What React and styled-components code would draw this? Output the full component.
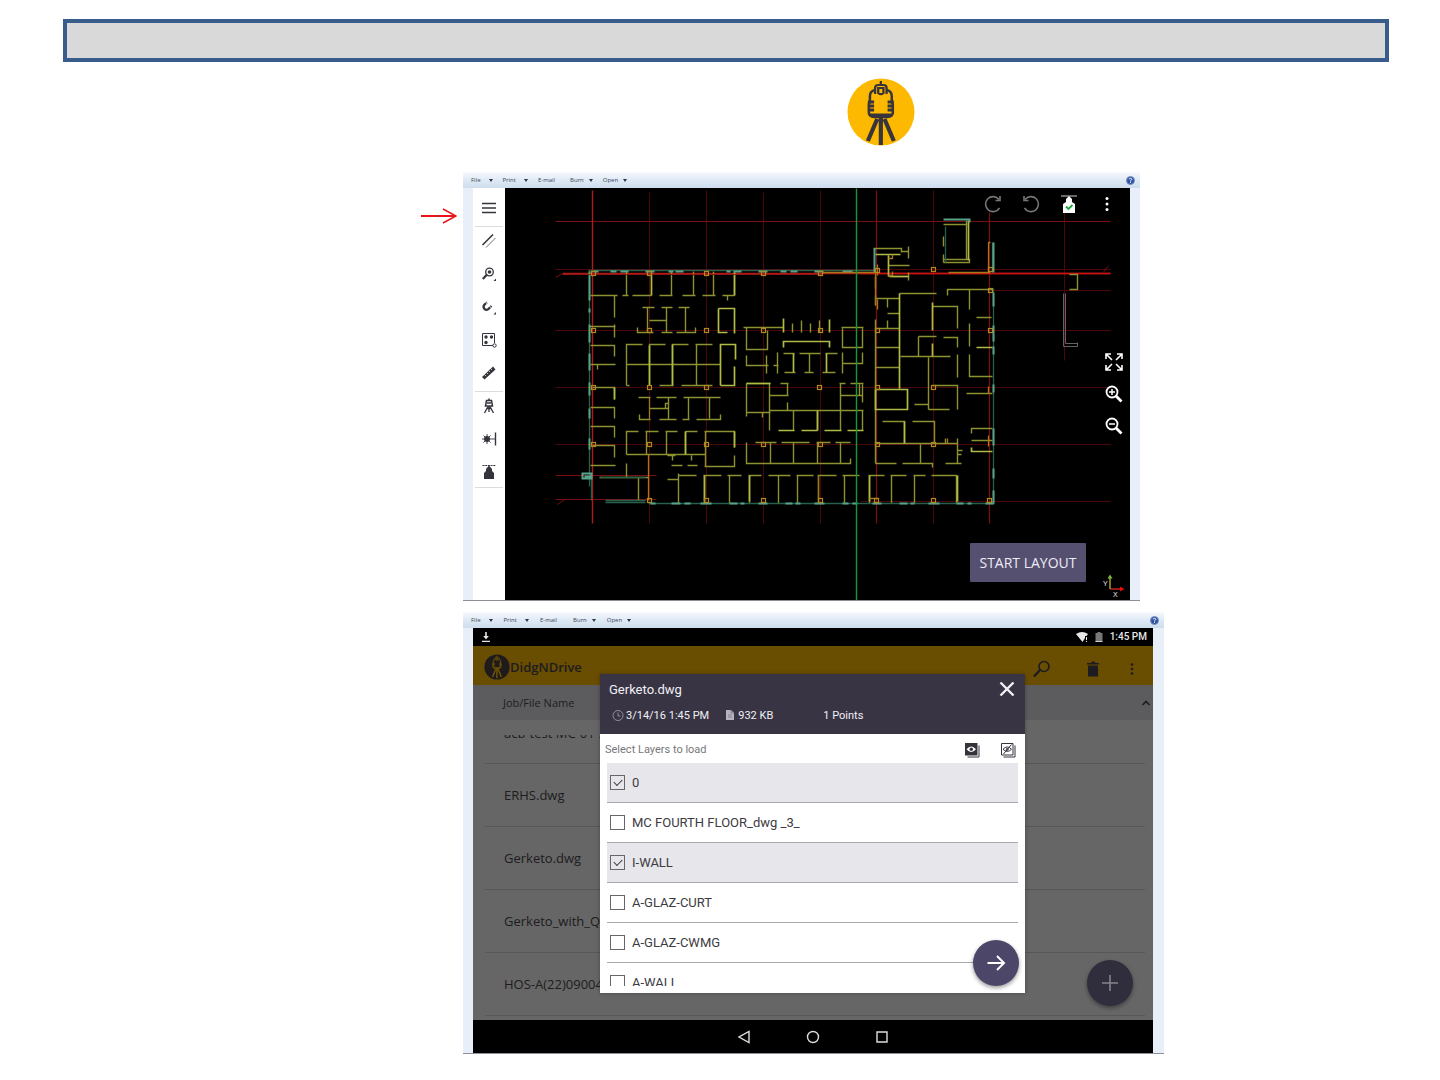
import styled, { createGlobalStyle } from 'styled-components'

const GlobalStyle = createGlobalStyle`
    * {
        box-sizing: border-box;
    }
    body {
        margin: 0;
        background: #fff;
        font-family: Roboto, sans-serif;
    }
    button {
        border: 0;
        padding: 0;
        background: none;
        color: inherit;
        font: inherit;
    }
    svg {
        display: block;
    }
`

// page
const Banner = styled.header`
    height: 43px;
    margin: 19px 51px 0 63px;
    border: 4px solid #385d8a;
    background: #d9d9d9;
`
const Sheet = styled.main`
    display: grid;
    grid-template-columns: 463fr 701fr 276fr;
    padding-top: 15px;
`
const LogoRow = styled.div`
    grid-column: 2;
    padding-left: 54.8%;
    padding-bottom: 26px;
`
const Pointer = styled.div`
    grid-column: 1;
    display: flex;
    justify-content: flex-end;
    padding: 35px 6px 0 0;
`
const Viewer = styled.section`
    grid-column: 2;
    min-width: 0;
    margin-right: ${props => props.$inset || '0'};
    margin-bottom: 11px;
    background: #e9eff9;
    border-bottom: 1px solid #8d9096;
`

// photo viewer menu
const MenuBar = styled.nav`
    display: flex;
    align-items: center;
    gap: ${props => props.$gap || '10px'};
    height: 16px;
    padding: 0 5px 0 8px;
    background: linear-gradient(#f7fafe, #dfe9f6 50%, #cddded);
`
const MenuItem = styled.button`
    display: flex;
    align-items: center;
    gap: ${props => (props.$wide ? '8px' : '5px')};
    margin-right: ${props => (props.$plain ? '5px' : '0')};
    font: 6px/12px 'Open Sans', sans-serif;
    color: #3c4656;
`
const Caret = styled.span`
    border: 2px solid transparent;
    border-top: 3px solid #2c3442;
    border-bottom: 0;
`
const Help = styled.button`
    margin-left: auto;
`

// cad app
const CadApp = styled.div`
    display: flex;
    margin: 0 10px;
    background: #000;
`
const ToolBar = styled.div`
    flex: 0 0 32px;
    background: #fff;
    color: #35343c;
`
const ToolGroup = styled.div`
    display: flex;
    flex-direction: column;
    height: ${props => props.$height};
    margin: 0 2px;
    border-bottom: 1px solid #dcdce0;
`
const Tool = styled.button`
    display: flex;
    justify-content: center;
    flex: 0 0 33px;
    padding-top: 6px;
`
const MenuTool = styled(Tool)`
    padding-top: 12px;
`
const Canvas = styled.div`
    position: relative;
    flex: 1;
    min-width: 0;
`
const Actions = styled.div`
    position: absolute;
    top: 4px;
    right: 11px;
    display: flex;
    gap: 14px;
`
const ZoomTools = styled.div`
    position: absolute;
    top: 163px;
    right: 5px;
    display: flex;
    flex-direction: column;
    gap: 10px;
    color: #fff;
`
const IconButton = styled.button`
    display: flex;
    align-items: center;
    justify-content: center;
    width: ${props => props.$size || '24px'};
    height: ${props => props.$size || '24px'};
    margin-right: ${props => props.$after || '0'};
`
const StartButton = styled.button`
    position: absolute;
    right: 44px;
    bottom: 18px;
    width: 116px;
    height: 39px;
    border-radius: 1px;
    background: #554f70;
    color: #eeedf5;
    font: 14px/20px 'Open Sans', sans-serif;
`

// tablet
const Tablet = styled.div`
    position: relative;
    margin: 0 11px 0 10px;
    background: #666;
    color: #1d1c20;
    font-family: 'Open Sans', sans-serif;
`
const StatusBar = styled.div`
    display: flex;
    align-items: center;
    gap: 6px;
    height: 18px;
    padding: 0 6px 0 8px;
    background: #000;
    color: #e6e6e6;
    font: 500 10px/18px Roboto, sans-serif;
`
const Spacer = styled.span`
    flex: 1;
`
const AppBar = styled.div`
    display: flex;
    align-items: center;
    height: 39px;
    padding: 2px 9px 0 11px;
    background: #694d00;
`
const AppName = styled.h1`
    flex: 1;
    margin: 0;
    font: 600 13px/16px 'Open Sans', sans-serif;
`
const AppActions = styled.div`
    display: flex;
    gap: 15px;
    padding-top: 4px;
`
const ColumnHead = styled.div`
    display: flex;
    align-items: center;
    justify-content: space-between;
    height: 35px;
    padding: 0 2px 0 30px;
    background: #5c5c5f;
    font-size: 11px;
`
const Files = styled.ul`
    height: 285px;
    margin: 15px 8px 0 12px;
    padding: 0;
    overflow: hidden;
    list-style: none;
    font-size: 13px;
    line-height: 18px;
`
const File = styled.li`
    display: flex;
    align-items: center;
    height: 63px;
    padding-left: 19px;
    border-bottom: 1px solid #575757;
    white-space: nowrap;
`
const CutFile = styled(File)`
    align-items: flex-start;
    height: 29px;
    overflow: hidden;

    span {
        margin-top: -11px;
    }
`
const NavBar = styled.div`
    display: flex;
    align-items: center;
    justify-content: center;
    gap: 45px;
    height: 33px;
    background: #000;
`
const Fab = styled.button`
    position: absolute;
    right: ${props => props.$right};
    bottom: ${props => props.$bottom};
    display: flex;
    align-items: center;
    justify-content: center;
    width: 46px;
    height: 46px;
    border-radius: 50%;
    background: ${props => props.color};
    box-shadow: 0 2px 4px rgba(0, 0, 0, 0.4);
`

// dialog
const Dialog = styled.div`
    position: absolute;
    top: 46px;
    left: 127px;
    right: 128px;
    background: #fff;
    font-family: Roboto, sans-serif;
    box-shadow: 0 0 4px rgba(0, 0, 0, 0.3);
`
const DialogHead = styled.div`
    height: 60px;
    padding: 6px 9px 0;
    background: #383444;
    color: #f1f0f5;
`
const TitleRow = styled.div`
    display: flex;
    align-items: flex-start;
    justify-content: space-between;
`
const Title = styled.h2`
    margin: 0;
    font: 13px/20px Roboto, sans-serif;
`
const Meta = styled.div`
    display: flex;
    align-items: center;
    gap: 2px;
    padding: 8px 3px 0;
    font-size: 11px;
    line-height: 16px;
`
const MetaText = styled.span`
    margin-right: ${props => props.$after || '0'};
`
const Hint = styled.div`
    display: flex;
    align-items: center;
    height: 29px;
    padding: 2px 9px 0 5px;
    color: #77777b;
    font-size: 11px;
`
const HintActions = styled.div`
    display: flex;
    gap: 20px;
    margin-left: auto;
`
const Layers = styled.div`
    height: 223px;
    margin: 0 7px 7px;
    overflow: hidden;
`
const Layer = styled.label`
    display: flex;
    align-items: center;
    gap: 7px;
    height: 40px;
    padding-left: 3px;
    border-bottom: 1px solid #a9a8ae;
    background: ${props => (props.$on ? '#e7e6eb' : '#fff')};
    color: #3c3b42;
    font-size: 13px;
`
const Check = styled.input`
    appearance: none;
    display: flex;
    align-items: center;
    justify-content: center;
    width: 15px;
    height: 15px;
    margin: 0;
    border: 1px solid #67666d;

    &:checked::after {
        content: '';
        width: 7px;
        height: 4px;
        margin-bottom: 2px;
        border: solid #3c3b42;
        border-width: 0 0 1px 1px;
        transform: rotate(-45deg);
    }
`

const menu = [
    { name: 'File', wide: true },
    { name: 'Print', wide: true },
    { name: 'E-mail', plain: true },
    { name: 'Burn' },
    { name: 'Open' },
]

const layers = [
    { name: '0', on: true },
    { name: 'MC FOURTH FLOOR_dwg _3_' },
    { name: 'I-WALL', on: true },
    { name: 'A-GLAZ-CURT' },
    { name: 'A-GLAZ-CWMG' },
    { name: 'A-WALL' },
]

const files = ['ERHS.dwg', 'Gerketo.dwg', 'Gerketo_with_Q', 'HOS-A(22)09004']

// floor plan, one path per pen
const plan = {
    grid: 'M649 192V523M706 190V523M763 192V523M820 190V523M933 190V523M1064 212V360M555 269H1110M555 330H1110M555 387H1110M555 444H1110M860 501H1110M990 290H1110',
    gridLight: 'M555 221H1110M876 190V523M989 212V523M555 475H656M555 499H656',
    gridBright: 'M592 190V523M562 273H1110',
    walls: `M590 295H617M614 295V317M626 271V295M622 295H628M632 295H651M659 295H672M671 271V295M682 295H695M693 271V295M702 295H715M713 271V295M722 295H734M734 272V295M727 295V300
        M642 307H654M647 307V332M661 307H672M666 307V332M678 307H689M685 307V332M649 320H666M637 327V332H653M661 332H672M676 332H695V327
        M589 326H615M614 324V337M590 345H614V356M590 364H615M597 364V369M592 387H614V399M590 407H614V418M590 426H614V437M592 445H614V457M590 465H615
        M626 385V344H642M649 385V344H665M672 385V344H688M696 385V344M695 344H712M626 364H720M626 385H629M659 385H673M681 385H712
        M638 397H650M656 397H676M683 397H720M668 397V419M688 397V419M709 397V418M649 408H668M639 414V419H650M659 419H676M682 419H689M696 419H720V414M665 408V403H668
        M626 454V431H638M645 431H658M665 431H677M685 431H697M646 431V454M666 431V454M685 431V454M704 431H734V447M705 431V466M734 455V466H704M626 454H705M626 463V477M667 455H675M672 455V460M671 465H682M691 455V460M687 465H697M667 479H678M599 477H648M638 477V500
        M678 503V473M678 475H696M703 475H721M704 475V503M727 475H741M729 475V503M748 475H761M749 475V503M768 475H790M778 475V503M796 475H813M797 475V503M817 475H836M818 475V503M842 475H859M844 475V503M868 475H884M869 475V503M890 475H906M891 475V503M913 475H925M914 475V503M931 475H956V503
        M743 327H783M746 327V349H767V330M746 355V365H768M766 355V373M773 365H778M777 352V373M792 323V332M801 320V332M810 323V332M819 320V332M783 353H794M799 353H820M825 353H837M809 353V372M784 372H795M804 372H813M822 372H835M841 327H863M842 328V347H862V328M862 352V363H842M842 352V373
        M746 383H770M780 383H788M746 383V416M769 383V430M746 412H770M762 412V417M769 395H788M787 383V395M787 402V410M769 410H863M839 383H845M850 383H863M840 395H862M840 383V430M862 384V402M859 384V395M862 410V430M793 410V430M817 410V430
        M746 442V463H850V458M755 442H776M781 442H809M816 442H830M835 442H850M770 442V463M793 442V463M817 442V463M840 442V463
        M875 276V288M875 295V305M875 319V463M875 298H899M887 298V307M887 320V328M887 313H899M875 328H899M875 347H899M875 367H899M899 293H936M900 356H950M918 336V356M918 336H936M932 306H957V328M943 337H957V347M957 354V377M932 385H957V409M914 404H928M928 409H949M928 357V409
        M947 295V289H993M969 289V309M969 323V346M969 354V376H992M976 317H991M966 393H992M971 433V428H992M971 440H992M882 421H904V443M912 421H934V443M875 443H957M875 463H896M920 444V463M902 463H932V467M945 463H961M957 438V463M945 438V443M957 450H962M957 454H961
        M873 248H901V252M901 251H908M908 246V258M888 265H909M888 276H909M908 272V280M943 224H967M943 262H969V259H943M943 236V246M943 254V262M966 220V259M1069 274H1077V289H1069`,
    wallsBright: `M651 273V295M734 272V295M718 308H734V333M718 308V332H727M649 345V385M672 344V385M720 385V344H735V359M734 366V385H720M614 387V399M685 431V454M734 431V447M704 475V501M749 475V501M869 475V501
        M783 318V332M829 319V332M783 347V341H829V347M793 353V372M826 353V372M778 430H794M801 430H817M824 430H841M847 430H863M817 410V430M875 254H900M888 255V276M890 276H908
        M899 293V388M875 389H907V409H875V389M932 302V330M932 343V356M976 347H992M971 447V451H992M904 421V443M957 475V501M968 220V260M746 383H770`,
    orange: `M648 454V500M649 397V419M822 272H875M877 299V309M877 264V275M948 272H990M988 272V242H990M988 386V393M988 435V446M875 273V305M888 258H892V254M888 275H892V271M818 476V500M878 498H869M947 438V443`,
    teal: 'M588 270H875M589 270V486M993 288V504M648 503H994M591 475V500M605 502H645M600 477H645M605 500H645M992 242V272M945 226V262',
    tealBright: `M589 271V300M589 308V312M589 324V342M589 353V370M589 382V395M589 408V418M589 438V449M593 271H598M610 271H616M620 271H628M645 271H654M668 271H673M675 271H683M726 271H730M733 271H741M758 271H767M780 271H786M790 271H797M814 271H823M842 271H852M874 248V272M943 219H969V222M993 242V272M993 292V306M993 325V341M993 346V354M993 384V392M993 428V445M993 468V478
        M582 473H591V478H582ZM584 476H590M650 503H655M671 503H680M684 503H690M700 503H711M729 503H737M740 503H744M758 503H767M785 503H792M795 503H800M814 503H824M842 503H848M852 503H857M872 503H881M899 503H907M910 503H914M928 503H939M956 503H963M967 503H971M985 503H993M993 490V503`,
}

// structural columns
const columns = [
    [593, 273], [649, 273], [706, 273], [763, 273], [820, 273], [877, 270], [933, 269], [990, 269], [990, 290],
    [593, 330], [649, 330], [706, 330], [763, 330], [820, 330], [877, 330], [990, 330],
    [593, 387], [649, 387], [706, 387], [819, 387], [877, 387], [933, 387],
    [593, 444], [649, 444], [706, 444], [763, 444], [820, 444], [877, 444], [933, 444],
    [649, 500], [706, 500], [763, 500], [820, 500], [876, 500], [933, 500], [989, 500],
]

function FloorPlan() {
    return (
        <svg width='100%' viewBox='505 188 625 412' fill='none'>
            <g transform='translate(0.5 0.5)'>
                <path d={plan.grid} stroke='#4c060a' />
                <path d={plan.gridLight} stroke='#7c0d10' strokeWidth='1.200' />
                <path d={plan.gridBright} stroke='#b01a18' strokeWidth='1.400' />
                <path d='M860 273H1110' stroke='#d01010' strokeWidth='1.600' />
                <path d='M555 277L562 273M557 504L564 499M1102 273L1108 265' stroke='#7c0d10' />
                <path d={plan.walls} stroke='#8d9130' strokeWidth='1.400' />
                <path d={plan.wallsBright} stroke='#b0bb45' strokeWidth='1.700' />
                <path d='M1063 293V346H1077V342M1065 293V343H1077' stroke='#606468' />
                <path d={plan.teal} stroke='#28604c' strokeWidth='1.300' />
                <path d={plan.tealBright} stroke='#58a48b' strokeWidth='2' />
                <path d='M562 274H822' stroke='#8e1514' />
                <path d={plan.orange} stroke='#a8761a' strokeWidth='1.300' />
                {columns.map(([x, y]) => (
                    <rect key={`${x}-${y}`} x={x - 2} y={y - 2} width='4' height='4' stroke='#b08a1e' strokeWidth='1.200' />
                ))}
                <path d='M856 188V600' stroke='#17973a' strokeWidth='1.400' />
            </g>
            <path d='M1110 589V577M1110 589H1121' stroke='#c8201a' strokeWidth='1.400' />
            <path d='M1110 589V578' stroke='#6da32d' strokeWidth='1.400' />
            <path d='M1107.500 578.500L1110 574.500L1112.500 578.500Z' fill='#7fb83a' />
            <path d='M1120 586.500L1124.500 589L1120 591.500Z' fill='#e01010' />
            <g fill='#e8e8e8' fontFamily='Liberation Sans, sans-serif' fontSize='7'>
                <text x='1103' y='586'>Y</text>
                <text x='1113' y='597'>X</text>
            </g>
        </svg>
    )
}

function Instrument() {
    return (
        <>
            <path d='M33.500 3V8M28 16V10Q28 7 31 7H36Q39 7 39 10V16M31 15V10H36V15Q33.500 17.500 31 15Z' fill='none' stroke='currentColor' strokeWidth='2.200' />
            <path d='M28 12Q23 13 23 18V24L22 26V35Q22.500 38.500 27 39H40Q44.500 38.500 45 35V26L44 24V18Q44 13 39 12' fill='none' stroke='currentColor' strokeWidth='2.400' />
            <path d='M21 24H27M21 28H27M21 32H27M40 24H46M40 28H46M40 32H46M23 37H44' stroke='currentColor' strokeWidth='2.800' />
            <path d='M33.500 39V67M30 41L21 63M37 41L46 63' stroke='currentColor' strokeWidth='4' />
        </>
    )
}

function Logo() {
    return (
        <svg width='68' height='69' viewBox='0 0 68 69' color='#38343a'>
            <circle cx='34' cy='35' r='33.500' fill='#fcb900' />
            <g transform='translate(-1 1) scale(1.04 1)'>
                <Instrument />
            </g>
        </svg>
    )
}

function AppLogo() {
    return (
        <svg width='26' height='26' viewBox='0 0 68 68' color='#745600'>
            <circle cx='34' cy='34' r='33' fill='#1f1b1d' />
            <g transform='translate(3 2) scale(0.92)'>
                <Instrument />
            </g>
        </svg>
    )
}

function Icon({ children, size = 16, box = 16, width = 1 }) {
    return (
        <svg width={size} height={size} viewBox={`0 0 ${box} ${box}`} fill='none' stroke='currentColor' strokeWidth={width}>
            {children}
        </svg>
    )
}

function ViewerMenu({ gap }) {
    return (
        <MenuBar $gap={gap}>
            {menu.map(item => (
                <MenuItem key={item.name} $wide={item.wide} $plain={item.plain}>
                    {item.name}
                    {!item.plain && <Caret />}
                </MenuItem>
            ))}
            <Help aria-label='Help'>
                <svg width='9' height='9' viewBox='0 0 9 9'>
                    <circle cx='4.500' cy='4.500' r='4' fill='#2c50a0' stroke='#7d93c4' />
                    <path d='M3.200 3.500Q3.300 2.300 4.500 2.300T5.800 3.500Q5.700 4.300 4.500 4.800V5.500M4.500 6.200V7' fill='none' stroke='#fff' />
                </svg>
            </Help>
        </MenuBar>
    )
}

function Tools() {
    return (
        <ToolBar>
            <ToolGroup $height='39px'>
                <MenuTool aria-label='Menu'>
                    <Icon width={1.5}><path d='M1 3.500H15M1 8H15M1 12.500H15' /></Icon>
                </MenuTool>
            </ToolGroup>
            <ToolGroup $height='165px'>
                <Tool aria-label='Lines'>
                    <Icon><path d='M1.500 12L12 1.500' strokeWidth='1.600' /><path d='M5 14.500L14.500 5' strokeWidth='0.700' /></Icon>
                </Tool>
                <Tool aria-label='Find point'>
                    <Icon>
                        <circle cx='8.500' cy='6' r='3.800' strokeWidth='1.300' />
                        <circle cx='8.500' cy='6' r='1.800' fill='currentColor' stroke='none' />
                        <path d='M6 8.500L1.800 13' strokeWidth='2.200' />
                        <path d='M15 12.500V15H12.500Z' fill='currentColor' stroke='none' />
                    </Icon>
                </Tool>
                <Tool aria-label='Snap'>
                    <Icon>
                        <path d='M6 3.300L3.500 5.500Q1.500 8 3.500 10Q6 11.800 8 9.500L10.500 7' strokeWidth='2.200' />
                        <path d='M4.500 3L6.500 5.500M8 6.500L10.200 9' stroke='#fff' strokeWidth='0.800' />
                        <path d='M15 13V15.500H12.500Z' fill='currentColor' stroke='none' />
                    </Icon>
                </Tool>
                <Tool aria-label='Points'>
                    <Icon>
                        <path d='M12 13.500H1.500V1.500H13.500V11' />
                        <g fill='currentColor' stroke='none'>
                            <circle cx='5' cy='5' r='1.700' /><circle cx='10.500' cy='5' r='1.700' /><circle cx='5' cy='10.500' r='1.700' />
                        </g>
                        <circle cx='13.500' cy='13.500' r='1.700' />
                    </Icon>
                </Tool>
                <Tool aria-label='Measure'>
                    <Icon>
                        <path d='M1 12L12 1.500L14.500 4.500L3.500 14.500Z' fill='currentColor' stroke='none' />
                        <path d='M3.500 9.500L5 11M5.500 7.500L7 9M7.500 5.500L9 7M9.500 3.500L11 5' stroke='#fff' strokeWidth='0.700' />
                    </Icon>
                </Tool>
            </ToolGroup>
            <ToolGroup $height='96px'>
                <Tool aria-label='Instrument'>
                    <Icon>
                        <path d='M5.500 2.500H10.500L11.500 8H4.500ZM8 0.500V2.500M6 5H10' strokeWidth='1.500' />
                        <path d='M8 8V14M7 8.500L3.500 15M9 8.500L12.500 15M6 10.500H10' strokeWidth='1.300' />
                    </Icon>
                </Tool>
                <Tool aria-label='Laser'>
                    <Icon>
                        <circle cx='6' cy='8' r='3' fill='currentColor' stroke='none' />
                        <path d='M6 3V13M1 8H14M2.500 4.500L9.500 11.500M9.500 4.500L2.500 11.500' strokeWidth='0.900' />
                        <path d='M14.500 1.500V14.500' strokeWidth='1.400' />
                    </Icon>
                </Tool>
                <Tool aria-label='Level'>
                    <Icon>
                        <path d='M1.500 1.500H14.500' strokeDasharray='2 0.700' />
                        <path d='M8 1.500L11 5V7L13 9V15H3V9L5 7V5Z' fill='currentColor' stroke='none' />
                    </Icon>
                </Tool>
            </ToolGroup>
        </ToolBar>
    )
}

function CadViewer() {
    return (
        <Viewer $inset='24px'>
            <ViewerMenu />
            <CadApp>
                <Tools />
                <Canvas>
                    <FloorPlan />
                    <Actions>
                        <IconButton aria-label='Redo'>
                            <Icon size={20} box={20} width={1.6}><g stroke='#77777b'><path d='M16 5.500A7.500 7.500 0 1 0 16.500 14' /><path d='M17 2V6.500H12.500' /></g></Icon>
                        </IconButton>
                        <IconButton aria-label='Undo'>
                            <Icon size={20} box={20} width={1.6}><g stroke='#77777b'><path d='M4 5.500A7.500 7.500 0 1 1 3.500 14' /><path d='M3 2V6.500H7.500' /></g></Icon>
                        </IconButton>
                        <IconButton aria-label='Level status'>
                            <Icon size={20} box={20}>
                                <path d='M2 2H18' stroke='#8a8a8a' strokeWidth='1.500' />
                                <path d='M10 2L13 5V8L16 10V19H4V10L7 8V5Z' fill='#fff' stroke='none' />
                                <path d='M7 12.500L9.500 15L13.500 11' stroke='#1da83a' strokeWidth='1.800' />
                            </Icon>
                        </IconButton>
                        <IconButton aria-label='More'>
                            <Icon><g fill='#fff' stroke='none'><circle cx='8' cy='2.500' r='1.500' /><circle cx='8' cy='8' r='1.500' /><circle cx='8' cy='13.500' r='1.500' /></g></Icon>
                        </IconButton>
                    </Actions>
                    <ZoomTools>
                        <IconButton $size='22px' aria-label='Fit'>
                            <Icon size={18} box={18} width={1.6}>
                                <path d='M1 6V1H6M1 1L7 7M12 1H17V6M17 1L11 7M1 12V17H6M1 17L7 11M17 12V17H12M17 17L11 11' />
                            </Icon>
                        </IconButton>
                        <IconButton $size='22px' aria-label='Zoom in'>
                            <Icon size={18} box={18}>
                                <circle cx='7' cy='7' r='5.500' strokeWidth='1.800' />
                                <path d='M4 7H10M7 4V10' strokeWidth='1.500' /><path d='M11 11L16.500 16.500' strokeWidth='2.800' />
                            </Icon>
                        </IconButton>
                        <IconButton $size='22px' aria-label='Zoom out'>
                            <Icon size={18} box={18}>
                                <circle cx='7' cy='7' r='5.500' strokeWidth='1.800' />
                                <path d='M4 7H10' strokeWidth='1.500' /><path d='M11 11L16.500 16.500' strokeWidth='2.800' />
                            </Icon>
                        </IconButton>
                    </ZoomTools>
                    <StartButton>START LAYOUT</StartButton>
                </Canvas>
            </CadApp>
        </Viewer>
    )
}

function LayerDialog() {
    return (
        <Dialog role='dialog' aria-labelledby='dialog-title'>
            <DialogHead>
                <TitleRow>
                    <Title id='dialog-title'>Gerketo.dwg</Title>
                    <IconButton $size='18px' aria-label='Close'>
                        <Icon width={2.4}><path d='M1.500 1.500L14.500 14.500M14.500 1.500L1.500 14.500' /></Icon>
                    </IconButton>
                </TitleRow>
                <Meta>
                    <Icon size={12} box={12} width={0.8}><g stroke='#a6a4ae'><circle cx='6' cy='5.500' r='5' /><path d='M6 2.500V6H8.500' /></g></Icon>
                    <MetaText $after='13px'>3/14/16 1:45 PM</MetaText>
                    <Icon size={12} box={12}><path d='M2 0H7L10 3V10H2Z' fill='#b5b3bd' stroke='none' /><path d='M7 0V3H10M4 5H8M4 7H8' stroke='#777482' strokeWidth='0.700' /></Icon>
                    <MetaText $after='48px'>932 KB</MetaText>
                    <MetaText>1 Points</MetaText>
                </Meta>
            </DialogHead>
            <Hint>
                Select Layers to load
                <HintActions>
                    <IconButton $size='16px' aria-label='Show all'>
                        <Icon>
                            <path d='M1 1H13.500V13.500H1Z' fill='#35343c' stroke='none' />
                            <path d='M15 3.500V15H3.500' stroke='#35343c' />
                            <path d='M2.500 7.300Q7.300 1.500 12 7.300Q7.300 12.500 2.500 7.300Z' fill='#fff' stroke='none' />
                            <circle cx='7.300' cy='7.300' r='1.700' fill='#35343c' stroke='none' />
                        </Icon>
                    </IconButton>
                    <IconButton $size='16px' aria-label='Hide all'>
                        <Icon>
                            <g stroke='#35343c'>
                                <path d='M1.500 1.500H13V13H1.500ZM15 3.500V15H3.500M3 7.300Q7.300 2.500 11.500 7.300Q7.300 11.500 3 7.300ZM3.500 12L11.500 2.500' />
                                <circle cx='7.300' cy='7.300' r='1' />
                            </g>
                        </Icon>
                    </IconButton>
                </HintActions>
            </Hint>
            <Layers>
                {layers.map(layer => (
                    <Layer key={layer.name} $on={layer.on}>
                        <Check type='checkbox' defaultChecked={layer.on} />
                        {layer.name}
                    </Layer>
                ))}
            </Layers>
            <Fab $right='6px' $bottom='7px' color='#4c4668' aria-label='Load layers'>
                <Icon size={20} box={20} width={2}><path d='M1.500 10H18M11 3L18 10L11 17' stroke='#fff' /></Icon>
            </Fab>
        </Dialog>
    )
}

function TabletViewer() {
    return (
        <Viewer>
            <ViewerMenu gap='11px' />
            <Tablet>
                <StatusBar>
                    <Icon size={10} box={10} width={1.6}><path d='M5 0V6M1 9.500H9' /><path d='M2.200 4L5 7.500L7.800 4Z' fill='currentColor' stroke='none' /></Icon>
                    <Spacer />
                    <Icon size={12} box={12}><path d='M0 3Q6 -1 12 3L10.500 5H9V7L6.500 11Z' fill='currentColor' stroke='none' /><path d='M10.500 6V9M10.500 10V11' /></Icon>
                    <Icon size={10} box={10}><path d='M3.500 0H6.500V1H8.500V10H1.500V1H3.500Z' fill='#777' stroke='none' /><path d='M1.500 9.500H8.500' stroke='#ccc' /></Icon>
                    1:45 PM
                </StatusBar>
                <AppBar>
                    <AppLogo />
                    <AppName>DidgNDrive</AppName>
                    <AppActions>
                        <IconButton $after='12px' aria-label='Search'>
                            <Icon size={18} box={18}><circle cx='11' cy='6.500' r='5' strokeWidth='1.600' /><path d='M7 10L1 16.500' strokeWidth='2.400' /></Icon>
                        </IconButton>
                        <IconButton aria-label='Delete'>
                            <Icon><path d='M2 2H6L7 0.500H9.500L10.500 2H14V3.500H2ZM3 4.500H13V15.500H3Z' fill='currentColor' stroke='none' /></Icon>
                        </IconButton>
                        <IconButton aria-label='More'>
                            <Icon><g fill='currentColor' stroke='none'><circle cx='8' cy='3.500' r='1.300' /><circle cx='8' cy='8' r='1.300' /><circle cx='8' cy='12.500' r='1.300' /></g></Icon>
                        </IconButton>
                    </AppActions>
                </AppBar>
                <ColumnHead>
                    Job/File Name
                    <Icon size={10} box={10} width={1.6}><path d='M1.500 7L5 3.500L8.500 7' /></Icon>
                </ColumnHead>
                <Files>
                    <CutFile><span>acb-test MC-01-2</span></CutFile>
                    {files.map(name => <File key={name}>{name}</File>)}
                </Files>
                <Fab $right='20px' $bottom='47px' color='#302d3d' aria-label='Add file'>
                    <Icon size={20} box={20} width={1.6}><path d='M10 2V18M2 10H18' stroke='#85848b' /></Icon>
                </Fab>
                <NavBar>
                    <IconButton aria-label='Back'>
                        <Icon width={1.4}><path d='M13 2.500V13.500L3 8Z' stroke='#ddd' /></Icon>
                    </IconButton>
                    <IconButton aria-label='Home'>
                        <Icon width={1.4}><circle cx='8' cy='8' r='5.500' stroke='#ddd' /></Icon>
                    </IconButton>
                    <IconButton aria-label='Recent'>
                        <Icon width={1.4}><path d='M3 3H13V13H3Z' stroke='#ddd' /></Icon>
                    </IconButton>
                </NavBar>
                <LayerDialog />
            </Tablet>
        </Viewer>
    )
}

export default function App() {
    return (
        <>
            <GlobalStyle />
            <Banner />
            <Sheet>
                <LogoRow>
                    <Logo />
                </LogoRow>
                <Pointer>
                    <svg width='38' height='18' viewBox='0 0 38 18' fill='none' stroke='#e8141a'>
                        <path d='M2 9H36' strokeWidth='1.800' />
                        <path d='M24 2L37 9L24 16' strokeWidth='1.500' />
                    </svg>
                </Pointer>
                <CadViewer />
                <TabletViewer />
            </Sheet>
        </>
    )
}
